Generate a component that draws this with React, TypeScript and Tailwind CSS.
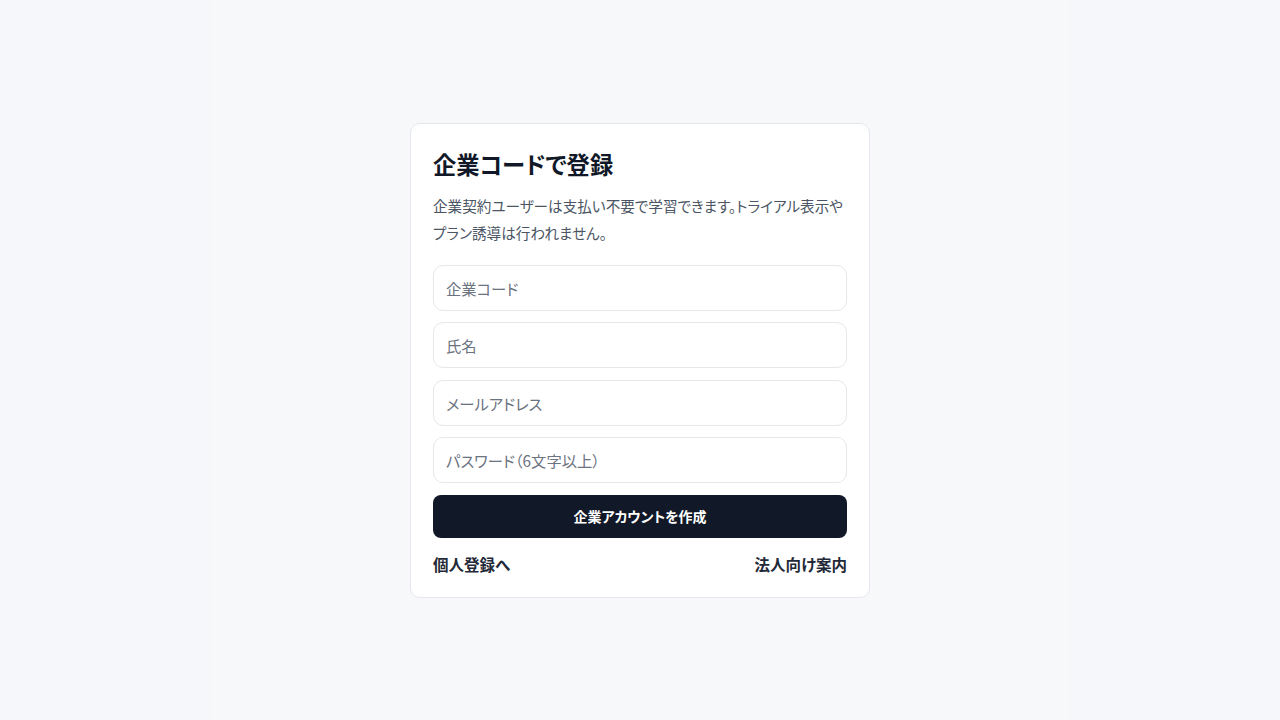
import React from 'react';

const fields = ['企業コード', '氏名', 'メールアドレス', 'パスワード（6文字以上）'];

export default function App() {
  return (
    <div
      className="min-h-screen w-full bg-[#f5f7fb] [font-feature-settings:'palt']"
      style={{ fontFamily: '"Noto Sans CJK JP", "Noto Sans", sans-serif' }}
    >
      <div className="mx-auto flex min-h-screen w-[860px] items-start justify-center bg-[#f7f8fa] pt-[123px]">
        <form
          className="w-[460px] rounded-[10px] border border-[#e5e7eb] bg-white p-[22px]"
          onSubmit={e => e.preventDefault()}
        >
          <h1 className="text-[23.3px] font-bold leading-[36px] text-[#111827]">企業コードで登録</h1>
          <p className="mt-[10px] text-[14.6px] leading-[27px] text-[#4b5563]">
            企業契約ユーザーは支払い不要で学習できます。トライアル表示やプラン誘導は行われません。
          </p>

          <div className="mt-[19px] flex flex-col gap-[11.4px]">
            {fields.map(label => (
              <input
                key={label}
                type={label.startsWith('パスワード') ? 'password' : 'text'}
                placeholder={label}
                className="h-[46px] w-full rounded-[10px] border border-[#e5e7eb] bg-white px-[12px] text-[15.3px] text-[#111827] outline-none placeholder:text-[#6b7280]"
              />
            ))}
            <button
              type="submit"
              className="h-[43px] w-full rounded-[8px] bg-[#111827] text-[14px] font-bold text-white"
            >
              企業アカウントを作成
            </button>
          </div>

          <div className="mt-[15px] flex items-center justify-between text-[15.5px] font-bold leading-[22px] text-[#1f2937]">
            <a href="#">個人登録へ</a>
            <a href="#">法人向け案内</a>
          </div>
        </form>
      </div>
    </div>
  );
}
